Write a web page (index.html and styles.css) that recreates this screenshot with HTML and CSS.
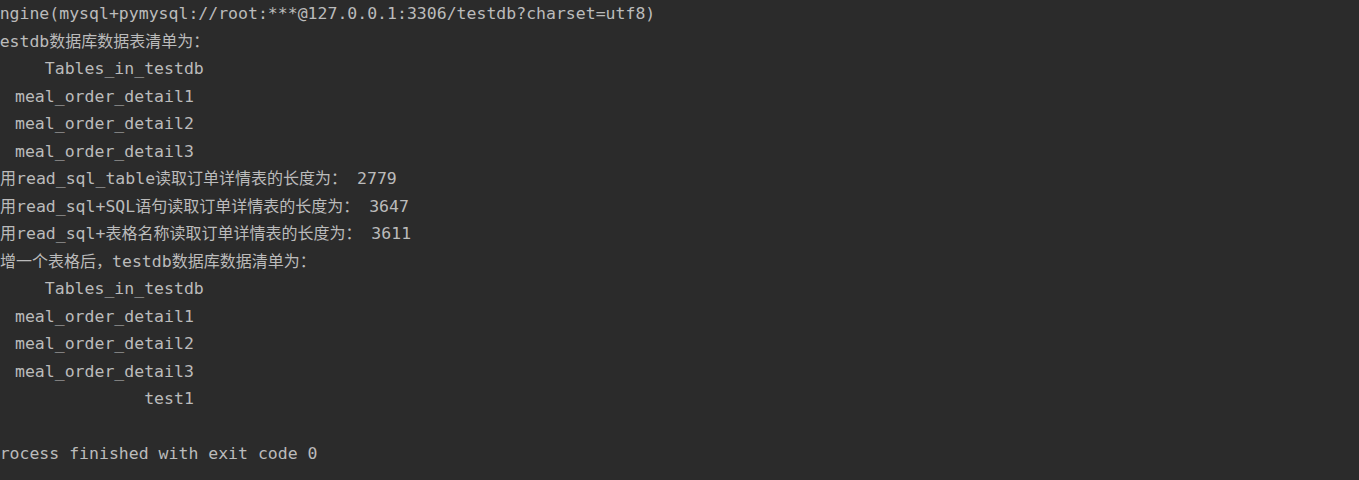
FILE: index.html
```html
<!DOCTYPE html>
<html lang="zh-CN">
<head>
<meta charset="utf-8">
<title>Run console</title>
<link rel="stylesheet" href="styles.css">
</head>
<body>
<main class="console">
  <div class="line ascii">Engine(mysql+pymysql://root:***@127.0.0.1:3306/testdb?charset=utf8)</div>
  <div class="line ascii">testdb<span class="zh">数据库数据表清单为：</span></div>
  <div class="line tbl">      Tables_in_testdb</div>
  <div class="line tbl">0  meal_order_detail1</div>
  <div class="line tbl">1  meal_order_detail2</div>
  <div class="line tbl">2  meal_order_detail3</div>
  <div class="line cjk"><span class="zh">使用</span>read_sql_table<span class="zh">读取订单详情表的长度为：</span> 2779</div>
  <div class="line cjk"><span class="zh">使用</span>read_sql+SQL<span class="zh">语句读取订单详情表的长度为：</span> 3647</div>
  <div class="line cjk"><span class="zh">使用</span>read_sql+<span class="zh">表格名称读取订单详情表的长度为：</span> 3611</div>
  <div class="line cjk"><span class="zh">新增一个表格后，</span>testdb<span class="zh">数据库数据清单为：</span></div>
  <div class="line tbl">      Tables_in_testdb</div>
  <div class="line tbl">0  meal_order_detail1</div>
  <div class="line tbl">1  meal_order_detail2</div>
  <div class="line tbl">2  meal_order_detail3</div>
  <div class="line tbl">3               test1</div>
  <div class="line empty"></div>
  <div class="line ascii">Process finished with exit code 0</div>
</main>
</body>
</html>
```
FILE: styles.css
```css
html, body {
  margin: 0;
  padding: 0;
  background: #2b2b2b;
  overflow: hidden;
}

body {
  width: 1359px;
  height: 480px;
}

.console {
  display: flex;
  flex-direction: column;
  font-family: "DejaVu Sans Mono", "Noto Sans CJK SC", monospace;
  font-size: 16.5px;
  line-height: 27.5px;
  color: #bbbbbb;
}

.line {
  white-space: pre;
  height: 27.5px;
}

.zh {
  font-family: "Noto Sans CJK SC", sans-serif;
  font-size: 16px;
  line-height: 0;
}

.ascii {
  text-indent: -10.3px;
}

.cjk {
  text-indent: -16px;
}

.tbl {
  text-indent: -14.8px;
}
```
